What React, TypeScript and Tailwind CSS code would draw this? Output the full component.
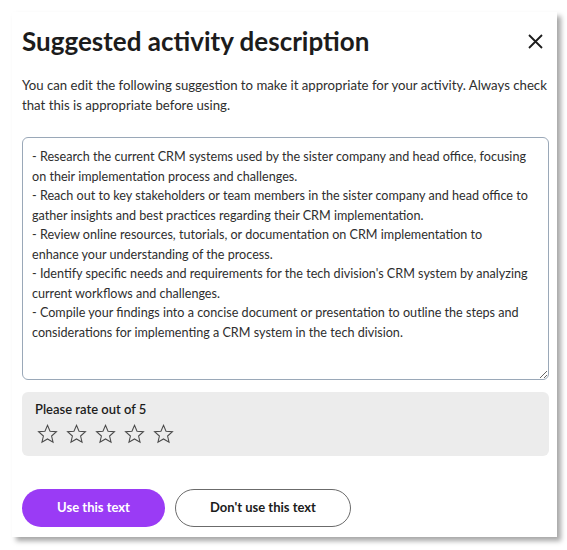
import React from "react";

const TEXT = `- Research the current CRM systems used by the sister company and head office, focusing on their implementation process and challenges.
- Reach out to key stakeholders or team members in the sister company and head office to gather insights and best practices regarding their CRM implementation.
- Review online resources, tutorials, or documentation on CRM implementation to enhance your understanding of the process.
- Identify specific needs and requirements for the tech division's CRM system by analyzing current workflows and challenges.
- Compile your findings into a concise document or presentation to outline the steps and considerations for implementing a CRM system in the tech division.`;

function StarIcon() {
  return (
    <svg width="21" height="20" viewBox="0 0 24 23" fill="none">
      <path
        d="M12 1.5 L14.9 8.3 L22.3 8.9 L16.7 13.8 L18.4 21 L12 17.2 L5.6 21 L7.3 13.8 L1.7 8.9 L9.1 8.3 Z"
        stroke="#4a4a4a"
        strokeWidth="1.2"
        strokeLinejoin="miter"
      />
    </svg>
  );
}

export default function App() {
  return (
    <div className="w-[567px] h-[550px] bg-white pt-[12px] pl-[12px]" style={{ fontFamily: "Lato, 'Noto Sans', sans-serif" }}>
      <div className="w-[545px] h-[525px] bg-white shadow-[4px_4px_5px_rgba(0,0,0,0.35)] pl-[10px] pr-[8px] pt-[11px] flex flex-col">
        <div className="flex items-center justify-between h-[36px]">
          <h1 className="text-[26px] leading-[36px] font-bold text-[#1c1c1c] tracking-[0px]">Suggested activity description</h1>
          <button className="mr-[6px] w-[16px] h-[16px] flex items-center justify-center">
            <svg width="15" height="15" viewBox="0 0 15 15">
              <path d="M1 1 L14 14 M14 1 L1 14" stroke="#1c1c1c" strokeWidth="1.8" />
            </svg>
          </button>
        </div>
        <p className="mt-[17px] text-[13.2px] leading-[19.5px] text-[#2e2e2e]">
          You can edit the following suggestion to make it appropriate for your activity. Always check that this is appropriate before using.
        </p>
        <textarea
          className="mt-[22px] w-full h-[243px] border border-[#9aa8b8] rounded-[6px] pl-[9px] pr-[18.5px] py-[9px] text-[12.6px] leading-[19.5px] text-[#2e2e2e] outline-none resize-y"
          style={{ fontFamily: "Lato, 'Noto Sans', sans-serif" }}
          defaultValue={TEXT}
        />
        <div className="mt-[12px] h-[64px] bg-[#ececec] rounded-[6px] pl-[13px] pt-[8px]">
          <div className="text-[13px] leading-[18px] font-semibold text-[#1c1c1c]">Please rate out of 5</div>
          <div className="flex gap-[8px] mt-[6px] ml-[2px]">
            <StarIcon />
            <StarIcon />
            <StarIcon />
            <StarIcon />
            <StarIcon />
          </div>
        </div>
        <div className="mt-[33px] flex gap-[10px]">
          <button className="w-[143px] h-[38px] rounded-full bg-[#9a3bf5] text-white text-[13px] font-bold">Use this text</button>
          <button className="w-[176px] h-[38px] rounded-full border border-[#6b6b6b] bg-white text-[#1c1c1c] text-[13px] font-bold">Don't use this text</button>
        </div>
      </div>
    </div>
  );
}
